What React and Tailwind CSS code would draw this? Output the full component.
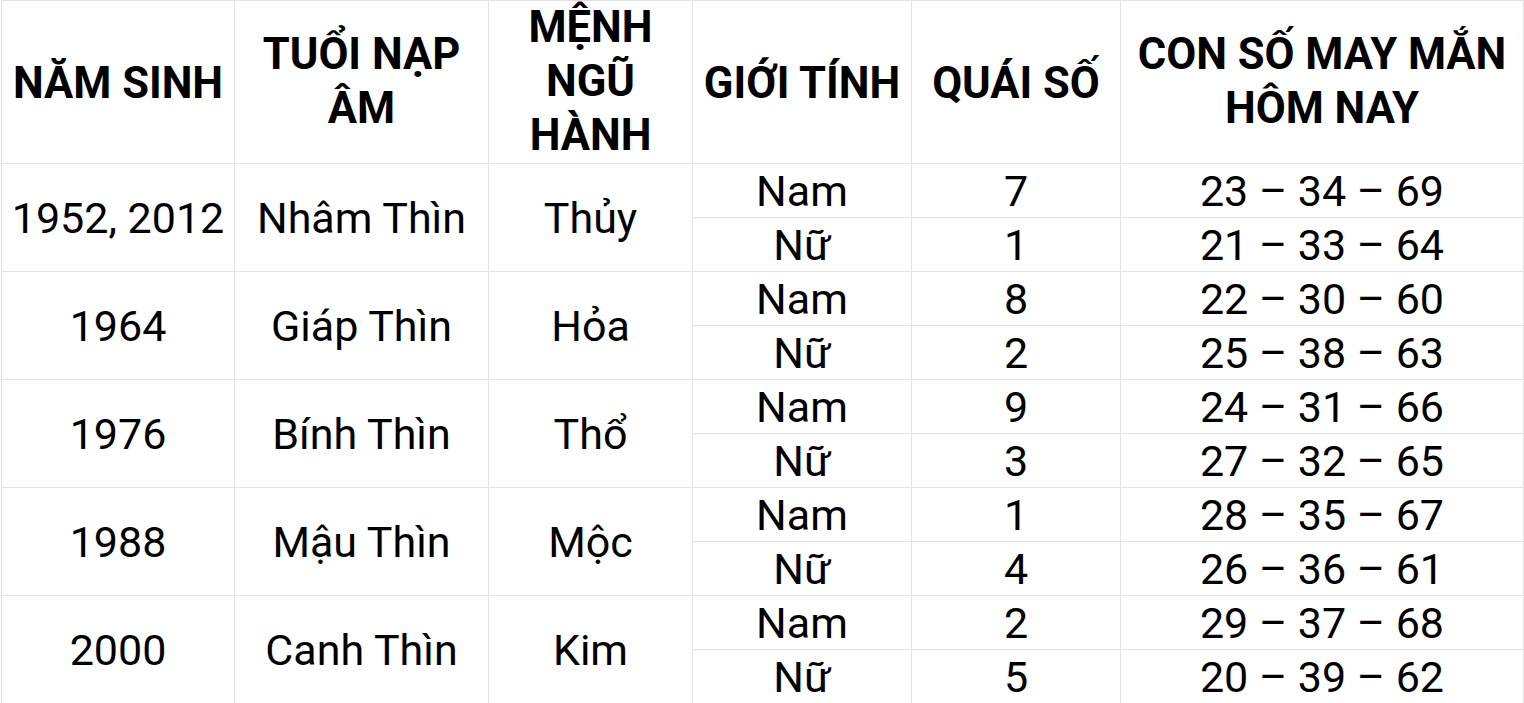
import React from "react";

const groups = [
  {
    year: "1952, 2012",
    tuoi: "Nhâm Thìn",
    menh: "Thủy",
    rows: [
      { gender: "Nam", quai: "7", nums: "23 – 34 – 69" },
      { gender: "Nữ", quai: "1", nums: "21 – 33 – 64" },
    ],
  },
  {
    year: "1964",
    tuoi: "Giáp Thìn",
    menh: "Hỏa",
    rows: [
      { gender: "Nam", quai: "8", nums: "22 – 30 – 60" },
      { gender: "Nữ", quai: "2", nums: "25 – 38 – 63" },
    ],
  },
  {
    year: "1976",
    tuoi: "Bính Thìn",
    menh: "Thổ",
    rows: [
      { gender: "Nam", quai: "9", nums: "24 – 31 – 66" },
      { gender: "Nữ", quai: "3", nums: "27 – 32 – 65" },
    ],
  },
  {
    year: "1988",
    tuoi: "Mậu Thìn",
    menh: "Mộc",
    rows: [
      { gender: "Nam", quai: "1", nums: "28 – 35 – 67" },
      { gender: "Nữ", quai: "4", nums: "26 – 36 – 61" },
    ],
  },
  {
    year: "2000",
    tuoi: "Canh Thìn",
    menh: "Kim",
    rows: [
      { gender: "Nam", quai: "2", nums: "29 – 37 – 68" },
      { gender: "Nữ", quai: "5", nums: "20 – 39 – 62" },
    ],
  },
];

function Cell({ children, className = "" }) {
  return (
    <div
      className={`flex items-center justify-center text-center border-r border-b border-[#e2e2e2] ${className}`}
    >
      <div>{children}</div>
    </div>
  );
}

export default function App() {
  return (
    <div className="w-[1524px] h-[703px] overflow-hidden bg-white pl-px font-['Roboto',sans-serif] text-black">
      <div className="grid grid-cols-[233px_254px_204px_219px_209px_1fr] grid-rows-[163px_repeat(10,54px)] border-l border-t border-[#e2e2e2] text-[43px] leading-[54px]">
        {/* header */}
        <Cell className="font-bold text-[43.5px] pt-[3px]">NĂM SINH</Cell>
        <Cell className="font-bold text-[43.5px]">
          TUỔI NẠP
          <br />
          ÂM
        </Cell>
        <Cell className="font-bold text-[43.5px]">
          MỆNH
          <br />
          NGŨ
          <br />
          HÀNH
        </Cell>
        <Cell className="font-bold text-[43.5px] pt-[3px]">GIỚI TÍNH</Cell>
        <Cell className="font-bold text-[43.5px] pt-[3px]">QUÁI SỐ</Cell>
        <Cell className="font-bold text-[43.5px]">
          CON SỐ MAY MẮN
          <br />
          HÔM NAY
        </Cell>

        {groups.map((g) => (
          <React.Fragment key={g.year}>
            <Cell className="row-span-2">{g.year}</Cell>
            <Cell className="row-span-2">{g.tuoi}</Cell>
            <Cell className="row-span-2">{g.menh}</Cell>
            <Cell>{g.rows[0].gender}</Cell>
            <Cell>{g.rows[0].quai}</Cell>
            <Cell>{g.rows[0].nums}</Cell>
            <Cell className="col-start-4">{g.rows[1].gender}</Cell>
            <Cell>{g.rows[1].quai}</Cell>
            <Cell>{g.rows[1].nums}</Cell>
          </React.Fragment>
        ))}
      </div>
    </div>
  );
}
